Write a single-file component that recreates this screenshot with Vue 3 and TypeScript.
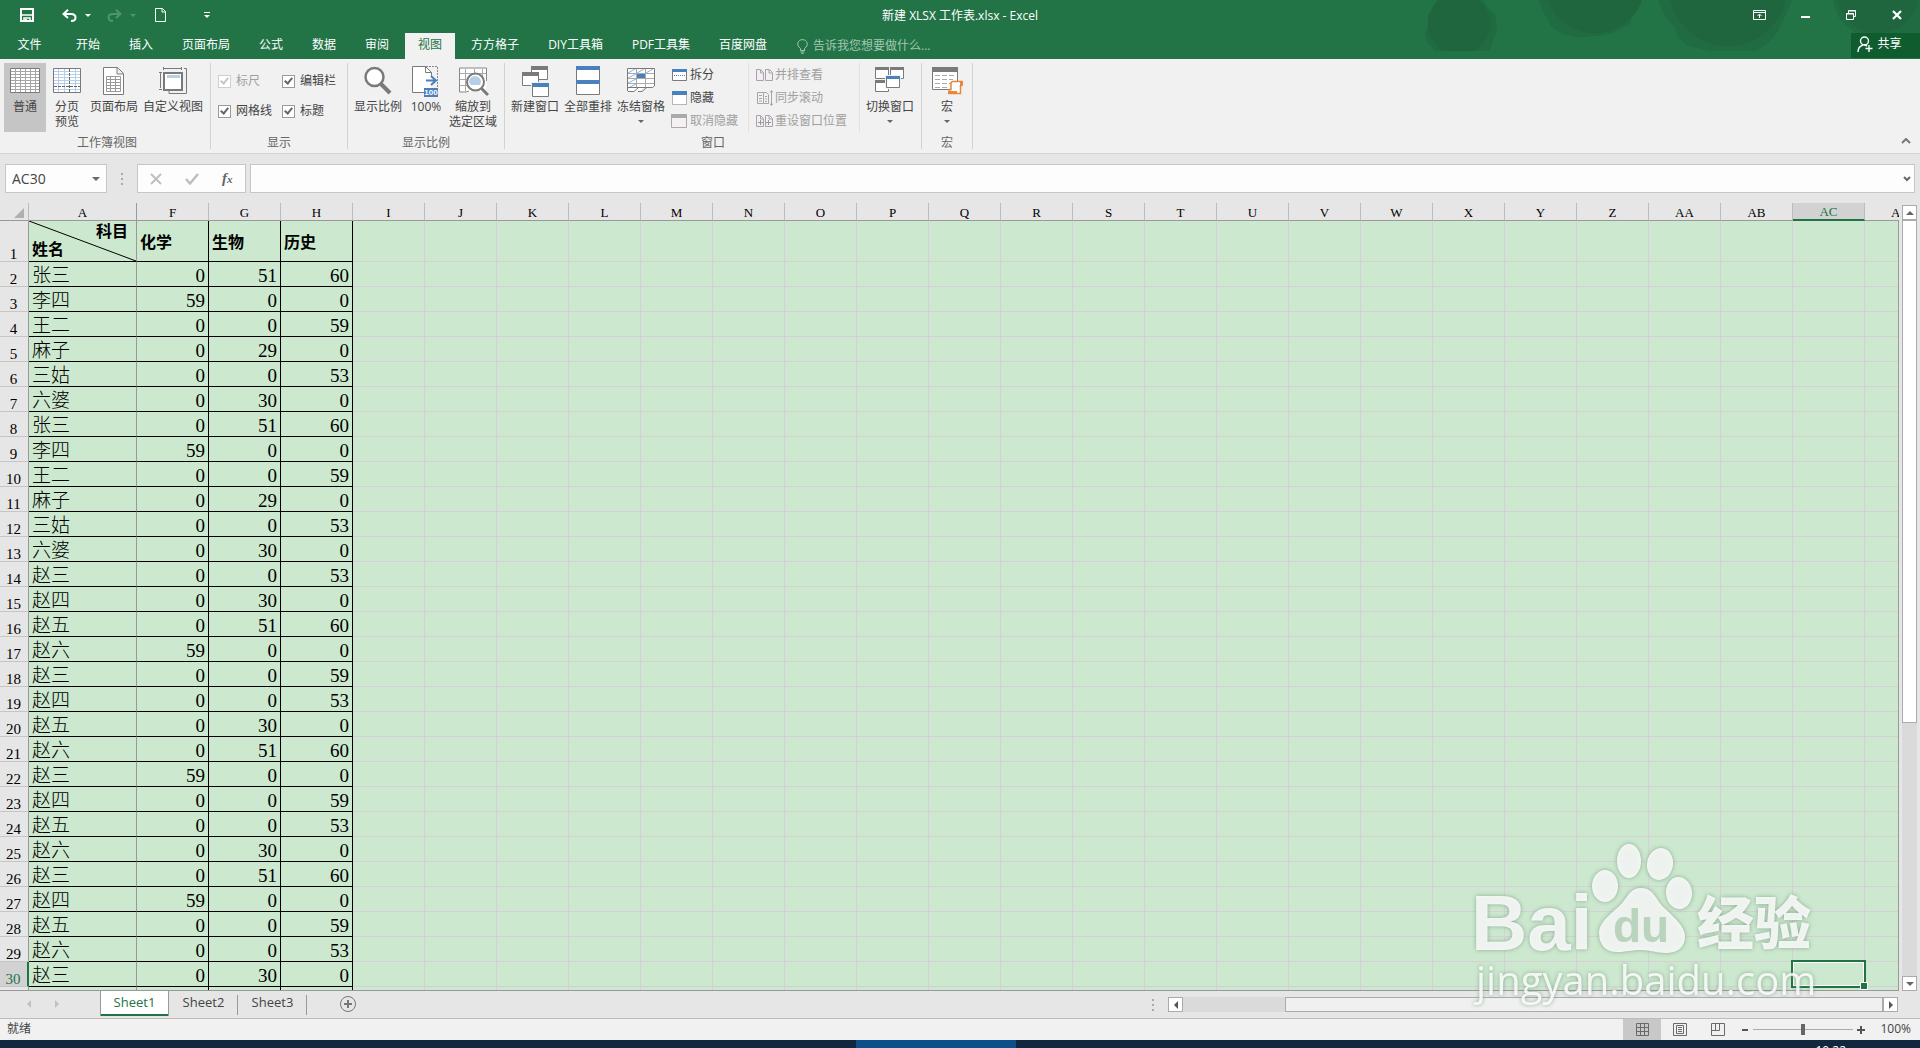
<script setup lang="ts">
import { ref } from 'vue'

const menus = ['开始', '插入', '页面布局', '公式', '数据', '审阅', '视图', '方方格子', 'DIY工具箱', 'PDF工具集', '百度网盘']
const activeMenu = ref('视图')

const emptyColumns = [
  ...'IJKLMNOPQRSTUVWXYZ'.split(''),
  'AA', 'AB', 'AC', 'AD',
]
const dataColumns = ['F', 'G', 'H']
const subjects = ['化学', '生物', '历史']

type Score = [string, number, number, number]
const scores: Score[] = [
  ['张三', 0, 51, 60], ['李四', 59, 0, 0], ['王二', 0, 0, 59], ['麻子', 0, 29, 0],
  ['三姑', 0, 0, 53], ['六婆', 0, 30, 0], ['张三', 0, 51, 60], ['李四', 59, 0, 0],
  ['王二', 0, 0, 59], ['麻子', 0, 29, 0], ['三姑', 0, 0, 53], ['六婆', 0, 30, 0],
  ['赵三', 0, 0, 53], ['赵四', 0, 30, 0], ['赵五', 0, 51, 60], ['赵六', 59, 0, 0],
  ['赵三', 0, 0, 59], ['赵四', 0, 0, 53], ['赵五', 0, 30, 0], ['赵六', 0, 51, 60],
  ['赵三', 59, 0, 0], ['赵四', 0, 0, 59], ['赵五', 0, 0, 53], ['赵六', 0, 30, 0],
  ['赵三', 0, 51, 60], ['赵四', 59, 0, 0], ['赵五', 0, 0, 59], ['赵六', 0, 0, 53],
  ['赵三', 0, 30, 0],
]

const selected = { column: 'AC', row: 30 }
const cellName = ref('AC30')
const formula = ref('')
const zoom = ref(100)
const ruler = ref(true)
const formulaBar = ref(true)
const gridLines = ref(true)
const headings = ref(true)
const sheets = ['Sheet1', 'Sheet2', 'Sheet3']
const activeSheet = ref('Sheet1')
</script>

<template>
  <div class="app">
    <header class="top">
      <svg class="decor" width="500" height="51" viewBox="0 0 500 51" aria-hidden="true">
        <g fill="#206b41">
          <path d="M17 0h46l5 8 8 7v8l1 8-4 8-3 12H15l-7-8-3-9 3-8V15z" />
          <path d="M118 0h101l-2 10-5 6-2 8-9 5-11 5-14 2-20 1-16-4-9-7-5-9z" />
          <path d="M238 0h134l-5 12-4 9-6 12-9 10-12 8h-44l-24-5-10-9-3-9-10-11z" />
          <path d="M413 0h87v33h-64l-10-7-8-10z" />
        </g>
        <g fill="#1f653e">
          <circle cx="39" cy="24" r="31" />
          <circle cx="175" cy="-17" r="50" />
          <circle cx="308" cy="-13" r="59" />
          <ellipse cx="458" cy="-4" rx="40" ry="37" />
        </g>
      </svg>
      <div class="titlebar">
        <div class="quick">
          <button class="q save" aria-label="保存">
            <svg width="14" height="14" viewBox="0 0 14 14"><path d="M1 1h12v12H1z" fill="none" stroke="#fff" stroke-width="2" /><path d="M2 7h10M4 14v-4h6v4" fill="none" stroke="#fff" stroke-width="1.5" /><path d="M5 11h2v3H5z" fill="#fff" /></svg>
          </button>
          <button class="q undo" aria-label="撤消">
            <svg width="15" height="13" viewBox="0 0 15 13"><path d="M1.500 5H9c6 0 6 7 0 7M6 .8L1.500 5 6 9" fill="none" stroke="#fff" stroke-width="2" /></svg>
          </button>
          <button class="q drop" aria-label="撤消列表"><i class="tri"></i></button>
          <button class="q redo" aria-label="恢复">
            <svg width="15" height="13" viewBox="0 0 15 13"><path d="M13.500 5H6C0 5 0 12 6 12M9 .8L13.500 5 9 9" fill="none" stroke="#4f9370" stroke-width="2" /></svg>
          </button>
          <button class="q drop dim" aria-label="恢复列表"><i class="tri"></i></button>
          <button class="q file" aria-label="新建">
            <svg width="11" height="14" viewBox="0 0 11 14"><path d="M.5.5h7l3 3v10H.5zM7 .5V4h3.500" fill="none" stroke="#fff" /></svg>
          </button>
          <button class="q more" aria-label="自定义快速访问工具栏">
            <svg width="6" height="7" viewBox="0 0 6 7"><path d="M0 .5h6" stroke="#fff" /><path d="M0 3h6L3 6z" fill="#fff" /></svg>
          </button>
        </div>
        <h1 class="title">新建 XLSX 工作表.xlsx - Excel</h1>
        <div class="winctl">
          <button aria-label="功能区显示选项"><svg width="13" height="10" viewBox="0 0 13 10"><path d="M.5.500h12v9H.5zM1 2.500h11M6.500 8V4.500M4.500 6l2-2 2 2" fill="none" stroke="#fff" /></svg></button>
          <button aria-label="最小化"><svg width="9" height="10" viewBox="0 0 9 10"><path d="M0 7h9" stroke="#fff" stroke-width="2" /></svg></button>
          <button aria-label="还原"><svg width="10" height="10" viewBox="0 0 10 10"><path d="M.5 3.500h7v6h-7zM2.500 3.500v-3h7v6h-2M.5 4h7M2.500 1h7" fill="none" stroke="#fff" /></svg></button>
          <button aria-label="关闭"><svg width="10" height="10" viewBox="0 0 10 10"><path d="M1 1l8 8M9 1L1 9" stroke="#fff" stroke-width="2.200" /></svg></button>
        </div>
      </div>
      <div class="menubar">
        <button class="menu first">文件</button>
        <nav class="menus">
          <button v-for="m in menus" :key="m" class="menu" :class="{ on: m === activeMenu }" @click="activeMenu = m">{{ m }}</button>
        </nav>
        <button class="tell">
          <svg width="11" height="15" viewBox="0 0 11 15"><path d="M3.500 11.500V9.500C-1.500 6 1 .6 5.500.6S12.500 6 7.500 9.500v2zM3.500 13h4M4.500 14.500h2" fill="none" stroke="#a3c7b2" /></svg>
          告诉我您想要做什么...
        </button>
        <button class="share">
          <svg width="16" height="17" viewBox="0 0 16 17"><circle cx="7.500" cy="5" r="4" fill="none" stroke="#fff" stroke-width="1.400" /><path d="M1 16c0-4 2-6 5-7M7 8.500l3 1.500M12 9v7M8.500 12.500h7" fill="none" stroke="#fff" stroke-width="1.400" /></svg>
          共享
        </button>
      </div>
    </header>

    <section class="ribbon">
      <div class="group g-views">
        <div class="tools">
          <button class="big pressed w42">
            <svg width="32" height="32" viewBox="0 0 32 32"><path d="M1.500 2.500h29v24h-29z" fill="#fff" /><path d="M6.500 3v23M11.500 3v23M16.500 3v23M21.500 3v23M26.500 3v23M2 5.500h28M2 8.500h28M2 11.500h28M2 14.500h28M2 17.500h28M2 20.500h28M2 23.500h28" stroke="#a5a5a5" /><path d="M1.500 2.500h29v24h-29z" fill="none" stroke="#7a7a7a" /></svg>
            <span>普通</span>
          </button>
          <button class="big w42">
            <svg width="32" height="32" viewBox="0 0 32 32"><path d="M2.500 2.500h27v24h-27z" fill="#fff" /><path d="M7.500 3v23M13.500 3v23M24.500 3v23M3 5.500h26M3 8.500h26M3 11.500h26M3 14.500h26M3 17.500h26M3 23.500h26" stroke="#b5cfe8" /><path d="M2.500 2.500h27v24h-27z" fill="none" stroke="#7a7a7a" /><path d="M18.500 3v23M3 20.500h26" stroke="#666" stroke-dasharray="3 1" /></svg>
            <span>分页<br>预览</span>
          </button>
          <button class="big w52">
            <svg width="32" height="32" viewBox="0 0 32 32"><path d="M5.500 1.500h14l6 6v21h-20zM19 1.500v6.500h6.500" fill="#fff" stroke="#7a7a7a" /><path d="M8.500 10.500h14v15h-14zM8.500 13.500h14M8.500 16.500h14M8.500 19.500h14M8.500 22.500h14M12.500 11v14M17.500 11v14" fill="none" stroke="#999" /></svg>
            <span>页面布局</span>
          </button>
          <button class="big w66">
            <svg width="32" height="32" viewBox="0 0 32 32"><path d="M6 2.500h19M6.500 1v3M24.500 1v3M3.500 6v16M2 6.500h3M2 23.500h3M27 2.500h2.500V27.500H12V25" fill="none" stroke="#7a7a7a" /><path d="M7 7h18v17H7z" fill="#fff" stroke="#7a7a7a" stroke-width="2" /><path d="M10 9h13v3H10z" fill="#b8cfe6" /></svg>
            <span>自定义视图</span>
          </button>
        </div>
        <div class="caption">工作簿视图</div>
      </div>

      <div class="group g-show">
        <div class="tools checks">
          <label class="dim"><input v-model="ruler" type="checkbox" disabled><span>标尺</span></label>
          <label><input v-model="formulaBar" type="checkbox"><span>编辑栏</span></label>
          <label><input v-model="gridLines" type="checkbox"><span>网格线</span></label>
          <label><input v-model="headings" type="checkbox"><span>标题</span></label>
        </div>
        <div class="caption">显示</div>
      </div>

      <div class="group g-zoom">
        <div class="tools">
          <button class="big w54">
            <svg width="32" height="32" viewBox="0 0 32 32"><path d="M19 18l9 9" stroke="#7a7a7a" stroke-width="4" /><circle cx="12.500" cy="11" r="9" fill="#fff" stroke="#7a7a7a" stroke-width="2.500" /></svg>
            <span>显示比例</span>
          </button>
          <button class="big w42">
            <svg width="32" height="32" viewBox="0 0 32 32"><path d="M16 .5h11.500V22" fill="none" stroke="#888" stroke-dasharray="2 1" /><path d="M2.500.500h13l6 6v20h-19z" fill="#fff" /><path d="M14 26.500H2.500V.5h13l6 6V10M15.500.5v6h6" fill="none" stroke="#7a7a7a" /><path d="M16 14.500h10M21 10l5 4.500-5 4.500" fill="none" stroke="#4a80bb" stroke-width="2" /><path d="M14 22h14v9H14z" fill="#4a80bb" /><text x="21" y="29" text-anchor="middle" class="tiny">100</text></svg>
            <span>100%</span>
          </button>
          <button class="big w52">
            <svg width="32" height="32" viewBox="0 0 32 32"><path d="M2.500 2.500h27v19l-4 4H22l-5-3-4 3H2.500z" fill="#fff" /><path d="M8.500 3v22M17.500 3v6M25.500 3v8M3 7.500h26M3 13.500h7M3 19.500h7" stroke="#aaa" /><path d="M12 25l-3 1H2.500v-24h27V15" fill="none" stroke="#888" /><path d="M24 22l7 7" stroke="#7a7a7a" stroke-width="3" /><circle cx="18.500" cy="16" r="8.500" fill="#fff" stroke="#7a7a7a" stroke-width="2" /><path d="M12 16a6 6 0 0 1 12 0l-1 3h-9z" fill="#b5cfe8" /></svg>
            <span>缩放到<br>选定区域</span>
          </button>
        </div>
        <div class="caption">显示比例</div>
      </div>

      <div class="group g-window">
        <div class="tools">
          <button class="big w54">
            <svg width="32" height="32" viewBox="0 0 32 32"><g fill="#fff" stroke="#7a7a7a"><path d="M12.500.5h16v13h-16z" /><path d="M3.500 6.500h16v13h-16z" /></g><path d="M12 0h17v4H12zM3 6h17v4H3z" fill="#7a7a7a" /><path d="M12 16h18v15H12z" fill="#f1f1f1" /><path d="M13.500 17.500h16v13h-16z" fill="#fff" stroke="#7a7a7a" /><path d="M13 17h17v4H13z" fill="#4a80bb" /></svg>
            <span>新建窗口</span>
          </button>
          <button class="big w52">
            <svg width="32" height="32" viewBox="0 0 32 32"><path d="M4.500.5h23v28h-23z" fill="#fff" stroke="#7a7a7a" /><path d="M4 0h24v4H4zM4 14h24v4H4z" fill="#4a80bb" /></svg>
            <span>全部重排</span>
          </button>
          <button class="big w54">
            <svg width="32" height="32" viewBox="0 0 32 32"><path d="M2.500 2.500h27v19h-10l-5 4h-12z" fill="#fff" /><path d="M3 7.500h26M3 12.500h26M3 17.500h26M11.500 3v18M20.500 3v18" stroke="#aaa" /><path d="M3 7l7-4M12 7l7-4M21 7l7-4M3 12l8-4M3 17l8-4M3 22l8-4" stroke="#8fb4da" /><path d="M12 8h8v4h-8z" fill="#4a80bb" /><path d="M2.500 25V2.500h27V20l-2 1.500H2.500M3 25.500h6l4-3.500M13 25.500h4l4-3.500" fill="none" stroke="#7a7a7a" /></svg>
            <span>冻结窗格</span><i class="tri"></i>
          </button>
          <div class="stack first-stack">
            <button>
              <svg width="17" height="14" viewBox="0 0 17 14"><path d="M1.500 1.500h14v11h-14z" fill="#fff" stroke="#7a7a7a" /><path d="M1 1h15v3H1z" fill="#4a80bb" /><path d="M3 7.500h11" stroke="#4a80bb" stroke-dasharray="1 1" /></svg>
              拆分
            </button>
            <button>
              <svg width="17" height="14" viewBox="0 0 17 14"><path d="M1.500 1.500h14v12h-14z" fill="#fff" stroke="#777" stroke-dasharray="1 1" /><path d="M1 0h15v4H1z" fill="#4a80bb" /></svg>
              隐藏
            </button>
            <button disabled>
              <svg width="17" height="14" viewBox="0 0 17 14"><path d="M.5.500h15v13H.5z" fill="#f4f0f4" stroke="#aaa" /><path d="M0 0h16v4H0z" fill="#aaa" /></svg>
              取消隐藏
            </button>
          </div>
          <div class="stack second-stack">
            <button disabled>
              <svg width="17" height="14" viewBox="0 0 17 14"><path d="M.5 1.500h4l3 3v8h-7zM9.500 1.500h4l3 3v8h-7zM4.500 2v3h3M13 2v3h3" fill="#f4eef4" stroke="#aaa2aa" /></svg>
              并排查看
            </button>
            <button disabled>
              <svg width="17" height="16" viewBox="0 0 17 16"><path d="M7 2.500H1.500v11H7M3 5.500h3M3 8.500h3M3 11h3M7.500 2.500h3l2 2v9h-5zM9 6.500h2M9 9h2M9 11.500h2M15.500 1v14M14 2.500l1.500-2 1.500 2M14 13.500l1.500 2 1.500-2" fill="none" stroke="#aaa2aa" /></svg>
              同步滚动
            </button>
            <button disabled>
              <svg width="17" height="14" viewBox="0 0 17 14"><path d="M.5 1.500h4l3 3v8h-7zM9.500 1.500h4l3 3v8h-7zM4.500 2v3h3M13 2v3h3" fill="#f4eef4" stroke="#aaa2aa" /><path d="M2 8.500h5M4.500 6v5M10 8.500h5M12.500 6v5" stroke="#999" /></svg>
              重设窗口位置
            </button>
          </div>
          <button class="big w60">
            <svg width="32" height="32" viewBox="0 0 32 32"><g fill="#fff" stroke="#7a7a7a"><path d="M1.500 1.500h13v11h-13zM16.500 1.500h13v11h-13zM1.500 14.500h13v11h-13z" /></g><path d="M1 1h14v3H1zM16 1h14v3H16zM1 14h14v3H1z" fill="#7a7a7a" /><path d="M11 9h16v14H11z" fill="#f1f1f1" /><path d="M12.500 10.500h13v11h-13z" fill="#fff" stroke="#7a7a7a" /><path d="M12 10h14v3H12z" fill="#4a80bb" /></svg>
            <span>切换窗口</span><i class="tri"></i>
          </button>
        </div>
        <div class="caption">窗口</div>
      </div>

      <div class="group g-macro">
        <div class="tools">
          <button class="big w50">
            <svg width="32" height="32" viewBox="0 0 32 32"><path d="M1.500 1.500h25v22h-25z" fill="#fff" stroke="#7a7a7a" /><path d="M1 1h26v5H1z" fill="#7a7a7a" /><path d="M4 9.500h20M4 13.500h18M4 17.500h16M4 21.500h14" stroke="#aaa" stroke-dasharray="5 2" /><path d="M21 15.500h10v4h-1.500v8H18.500v-4H20v-6q0-2 2-2z" fill="#fff" stroke="#e8873a" stroke-width="1.500" /><path d="M17 25h9v3h-9zM29 15h3v4h-3z" fill="#e8873a" /></svg>
            <span>宏</span><i class="tri"></i>
          </button>
        </div>
        <div class="caption">宏</div>
      </div>
      <button class="collapse" aria-label="折叠功能区"><svg width="10" height="6" viewBox="0 0 10 6"><path d="M1 5l4-4 4 4" fill="none" stroke="#777" stroke-width="2" /></svg></button>
    </section>

    <section class="formula-row">
      <div class="namebox"><input v-model="cellName" aria-label="名称框"><button aria-label="名称列表"><i class="tri wide"></i></button></div>
      <span class="dots"></span>
      <div class="fxbox">
        <button aria-label="取消"><svg width="12" height="12" viewBox="0 0 12 12"><path d="M1 1l10 10M11 1L1 11" stroke="#bdbdbd" stroke-width="1.800" /></svg></button>
        <button aria-label="输入"><svg width="14" height="12" viewBox="0 0 14 12"><path d="M1 6l4 4.500L13 1" fill="none" stroke="#bdbdbd" stroke-width="2.400" /></svg></button>
        <button class="fx" aria-label="插入函数">f<sub>x</sub></button>
      </div>
      <div class="formula"><input v-model="formula" aria-label="编辑栏"><button aria-label="展开编辑栏"><svg width="8" height="6" viewBox="0 0 8 6"><path d="M1 1l3 3 3-3" fill="none" stroke="#666" stroke-width="2" /></svg></button></div>
    </section>

    <main class="work">
      <div class="grid">
        <table>
          <colgroup>
            <col class="c-num"><col class="c-name">
            <col v-for="c in dataColumns" :key="c"><col v-for="c in emptyColumns" :key="c">
          </colgroup>
          <thead>
            <tr>
              <th class="corner"><i></i></th>
              <th class="edge">A</th>
              <th v-for="c in dataColumns" :key="c">{{ c }}</th>
              <th v-for="c in emptyColumns" :key="c" :class="{ sel: c === selected.column }">{{ c }}</th>
            </tr>
          </thead>
          <tbody>
            <tr class="head">
              <th scope="row">1</th>
              <td class="split">
                <svg width="107" height="40" viewBox="0 0 107 40" aria-hidden="true"><path d="M0 0l107 40" stroke="#000" /></svg>
                <div class="subject">科目</div><div class="person">姓名</div>
              </td>
              <td v-for="s in subjects" :key="s" class="data title-cell">{{ s }}</td>
              <td v-for="c in emptyColumns" :key="c"></td>
            </tr>
            <tr v-for="(row, i) in scores" :key="i">
              <th scope="row" :class="{ sel: i + 2 === selected.row }">{{ i + 2 }}</th>
              <td class="name">{{ row[0] }}</td>
              <td v-for="k in 3" :key="k" class="data">{{ row[k] }}</td>
              <td v-for="c in emptyColumns" :key="c" :class="{ cursor: c === selected.column && i + 2 === selected.row }"></td>
            </tr>
            <tr>
              <th scope="row"></th><td class="name"></td>
              <td v-for="k in 3" :key="k" class="data"></td>
              <td v-for="c in emptyColumns" :key="c"></td>
            </tr>
          </tbody>
        </table>
      </div>
      <div class="vscroll">
        <button aria-label="向上滚动"><i class="tri up"></i></button>
        <div class="vtrack"><div class="vthumb"></div></div>
        <button aria-label="向下滚动"><i class="tri wide"></i></button>
      </div>
    </main>

    <div class="sheetbar">
      <div class="navs">
        <button aria-label="上一张"><i class="side left"></i></button>
        <button aria-label="下一张"><i class="side right"></i></button>
      </div>
      <button v-for="s in sheets" :key="s" class="sheet" :class="{ on: s === activeSheet }" @click="activeSheet = s">{{ s }}</button>
      <button class="add" aria-label="新工作表"><svg width="18" height="18" viewBox="0 0 18 18"><circle cx="9" cy="9" r="7.500" fill="none" stroke="#777" /><path d="M5 9h8M9 5v8" stroke="#777" stroke-width="2" /></svg></button>
      <span class="dots"></span>
      <div class="hscroll">
        <button aria-label="向左滚动"><i class="side left dark"></i></button>
        <div class="htrack"><div class="hthumb"></div></div>
        <button aria-label="向右滚动"><i class="side right dark"></i></button>
      </div>
    </div>

    <footer class="status">
      <span class="ready">就绪</span>
      <button class="view on" aria-label="普通视图"><svg width="13" height="13" viewBox="0 0 13 13"><path d="M.5.500h12v12H.5zM4.500.5v12M8.500.5v12M.5 4.500h12M.5 8.500h12" fill="none" stroke="#6a6a6a" /></svg></button>
      <button class="view" aria-label="页面布局视图"><svg width="14" height="13" viewBox="0 0 14 13"><path d="M.5.500h13v12H.5zM3.500 2.500h7v8h-7zM5 4.500h4M5 6.500h4M5 8.500h4" fill="none" stroke="#6a6a6a" /></svg></button>
      <button class="view" aria-label="分页预览视图"><svg width="14" height="13" viewBox="0 0 14 13"><path d="M.5.500h13v12H.5zM4.500.5v7M8.500.5v7M.5 7.500h8" fill="none" stroke="#6a6a6a" /></svg></button>
      <button class="step" aria-label="缩小"><svg width="8" height="8" viewBox="0 0 8 8"><path d="M1 4h6" stroke="#555" stroke-width="2" /></svg></button>
      <input v-model="zoom" class="slider" type="range" min="10" max="190" aria-label="缩放级别">
      <button class="step" aria-label="放大"><svg width="8" height="8" viewBox="0 0 8 8"><path d="M0 4h8M4 0v8" stroke="#555" stroke-width="2" /></svg></button>
      <button class="percent">{{ zoom }}%</button>
    </footer>

    <div class="taskbar"><div class="task"></div><span class="clock">10:22</span></div>

    <svg class="watermark" width="360" height="180" viewBox="0 0 360 180" aria-hidden="true">
      <g fill="#fff" fill-opacity=".85">
        <text x="2" y="106" class="wm-brand">Bai</text>
        <ellipse cx="136" cy="42" rx="13" ry="16" />
        <ellipse cx="160" cy="17" rx="12" ry="17" />
        <ellipse cx="191" cy="20" rx="13" ry="16" transform="rotate(10 191 20)" />
        <ellipse cx="210" cy="49" rx="13" ry="16" transform="rotate(-5 210 49)" />
        <path d="M172 44c9 0 13 6 18 14s26 21 26 34c0 12-8 17-19 17-10 0-15-3-25-3s-15 2-24 2c-11 0-18-7-18-19 0-13 18-23 24-31s9-14 18-14z" />
        <text x="228" y="100" class="wm-cn">经验</text>
      </g>
      <text x="144" y="98" class="wm-du">du</text>
      <text x="7" y="151" class="wm-url">jingyan.baidu.com</text>
    </svg>
  </div>
</template>

<style>
html, body { overflow: hidden; background: #e6e6e6; }
</style>

<style scoped>
.app {
  position: relative;
  display: flex;
  flex-direction: column;
  height: 100vh;
  overflow: hidden;
  font: 12px/16px "Open Sans", "Noto Sans CJK SC", sans-serif;
  color: #444;
}
.app *, .app *::before, .app *::after { box-sizing: border-box; }
button {
  display: flex;
  align-items: center;
  justify-content: center;
  margin: 0;
  padding: 0;
  border: 0;
  background: none;
  color: inherit;
  font: inherit;
  white-space: nowrap;
}
input { font: inherit; color: inherit; margin: 0; }
svg { display: block; flex: none; }
.tri {
  flex: none;
  width: 0;
  height: 0;
  border: 3px solid transparent;
  border-top: 3px solid #666;
  border-bottom: 0;
}
.tri.wide { border-width: 4px 4px 0; }
.tri.up { border-width: 0 4px 4px; border-bottom: 4px solid #666; }

.top { position: relative; flex: none; background: #227447; color: #fff; }
.decor { position: absolute; top: 0; right: 0; width: 500px; }
.titlebar { position: relative; display: flex; height: 33px; justify-content: space-between; }
.quick { display: flex; flex: 1; align-items: center; padding-bottom: 3px; }
.save { margin-left: 20px; }
.undo { margin-left: 28px; }
.drop { width: 22px; }
.drop .tri { border-top-color: #fff; }
.drop.dim .tri { border-top-color: #4f9370; }
.redo { margin-left: 8px; }
.file { margin-left: 11px; }
.more { margin-left: 38px; }
.title { margin: 0; font-size: 12px; font-weight: 400; line-height: 31px; }
.winctl { display: flex; flex: 1; justify-content: flex-end; padding-bottom: 3px; }
.winctl button { width: 46px; }
.menubar { position: relative; display: flex; height: 26px; }
.menus { display: flex; gap: 3px; margin-left: 4px; }
.menu { padding: 0 13px 2px; }
.menu.first { width: 59px; }
.menu.on { background: #f1f1f1; color: #217346; }
.tell { gap: 5px; margin-left: 17px; color: #a3c7b2; }
.share { gap: 4px; width: 69px; height: 25px; margin-left: auto; padding: 0 12px 3px 0; background: #0f5c2f; }

.ribbon { display: flex; flex: none; height: 95px; padding: 4px 0 4px 4px; background: #f1f1f1; border-bottom: 1px solid #d2d2d2; }
.group { display: flex; flex-direction: column; border-right: 1px solid #d2d2d2; }
.tools { display: flex; flex: 1; align-items: flex-start; }
.caption { height: 12px; line-height: 12px; text-align: center; color: #666; }
.g-views { width: 207px; }
.g-show { width: 137px; }
.g-zoom { width: 157px; }
.g-zoom .tools { padding-left: 3px; }
.g-window { width: 417px; }
.g-window .tools { padding-left: 3px; }
.g-macro { width: 51px; }
.big { flex: none; flex-direction: column; justify-content: flex-start; height: 69px; padding-top: 3px; line-height: 15px; }
.big span { margin-top: 1px; }
.big .tri { margin-top: 6px; }
.big.pressed { background: #c5c5c5; }
.w42 { width: 42px; }
.w50 { width: 50px; }
.w52 { width: 52px; }
.w54 { width: 54px; }
.w60 { width: 60px; }
.w66 { width: 66px; }
.tiny { font: bold 8px "Liberation Sans", sans-serif; fill: #fff; }
.checks { display: grid; grid-template-columns: 64px 1fr; grid-template-rows: 30px 30px; padding: 3px 0 0 7px; align-items: center; }
.checks label { display: flex; align-items: center; gap: 5px; }
.checks label.dim { color: #a0a0a0; }
.checks input { position: relative; appearance: none; width: 13px; height: 13px; border: 1px solid #9a9a9a; background: #fff; }
.checks input:checked::after { content: ""; position: absolute; left: 3px; top: 0; width: 5px; height: 8px; border: solid #666; border-width: 0 2px 2px 0; transform: rotate(40deg); }
.checks .dim input { border-color: #cfcfcf; }
.checks .dim input:checked::after { border-color: #c5c5c5; }
.stack { display: flex; flex-direction: column; height: 69px; }
.stack button { gap: 2px; height: 23px; justify-content: flex-start; }
.stack button:disabled { color: #a0a0a0; }
.first-stack { width: 81px; padding-left: 3px; border-right: 1px solid #e0e0e0; }
.second-stack { width: 111px; padding-left: 7px; border-right: 1px solid #e0e0e0; }
.collapse { align-self: flex-end; width: 28px; height: 16px; margin-left: auto; }

.formula-row { display: flex; flex: none; gap: 4px; height: 49px; padding: 10px 5px; background: #e6e6e6; }
.formula-row > div { display: flex; height: 29px; background: #fdfdfd; border: 1px solid #c6c6c6; }
.formula-row input { flex: 1; min-width: 0; padding: 0 0 0 6px; border: 0; background: none; outline: 0; font-size: 14px; }
.namebox { width: 102px; }
.namebox button { width: 20px; }
.dots { width: 2px; height: 12px; background: repeating-linear-gradient(#aaa 0 2px, transparent 2px 5px); }
.formula-row .dots { align-self: center; margin: 0 10px; }
.fxbox { width: 109px; }
.fxbox button { flex: 1; }
.fx { font: italic bold 15px "Liberation Serif", serif; color: #666; }
.fx sub { font-size: 11px; line-height: 8px; }
.formula { flex: 1; }
.formula button { width: 15px; }

.work { display: flex; flex: 1; min-height: 0; background: #e6e6e6; }
.grid { flex: 1; min-width: 0; overflow: hidden; border-bottom: 1px solid #999; position: relative; }
.grid::after { content: ""; position: absolute; top: 17px; right: 0; bottom: 0; width: 1px; background: #999; }
table { table-layout: fixed; width: 100%; border-collapse: separate; border-spacing: 0; }
col { width: 72px; }
.c-num { width: 29px; }
.c-name { width: 108px; }
th { padding: 0; font: 14px/16px "Liberation Serif", serif; color: #000; background: #e6e6e6; }
thead th { height: 18px; border-right: 1px solid #bcbcbc; border-bottom: 1px solid #999; font-size: 13px; line-height: 15px; vertical-align: bottom; }
thead th.edge { border-right-color: #999; }
thead th.sel { background: #d2d2d2; color: #217346; border-bottom: 2px solid #217346; }
.corner i { display: block; width: 0; height: 0; margin: 0 4px 2px auto; border-left: 10px solid transparent; border-bottom: 10px solid #b0b0b0; }
tbody th { height: 25px; padding: 0 1px 0 0; font-size: 15px; line-height: 14px; vertical-align: bottom; border-right: 1px solid #999; border-bottom: 1px solid #c6c6c6; }
tbody th.sel { background: #d2d2d2; color: #217346; border-right: 2px solid #217346; }
td { height: 25px; padding: 4px 3px 0; background: #cce8cf; border-right: 1px solid #d4d0d6; border-bottom: 1px solid #d4d0d6; font: 19px/20px "Liberation Serif", "Noto Sans CJK SC", serif; color: #000; white-space: nowrap; }
.head th, .head td { height: 41px; }
td.name, td.split { border-right-color: #999; border-bottom-color: #000; }
td.name { font-weight: 300; }
td.data { border-right-color: #000; border-bottom-color: #000; text-align: right; }
td.title-cell { text-align: left; font-size: 16px; font-weight: 700; padding-bottom: 1px; }
td.split { position: relative; padding: 2px 8px 0 3px; font-size: 16px; line-height: 18px; font-weight: 700; vertical-align: top; }
.split svg { position: absolute; left: 0; top: 0; }
.subject { text-align: right; }
.cursor { position: relative; }
.cursor::before { content: ""; position: absolute; inset: -2px; border: 2px solid #217346; box-shadow: inset 0 0 0 1px #fff; }
.cursor::after { content: ""; position: absolute; right: -3px; bottom: -3px; width: 6px; height: 6px; background: #217346; outline: 1px solid #fff; }

.vscroll { display: flex; flex-direction: column; width: 21px; padding: 2px 3px 0; }
.vscroll button, .hscroll button { flex: none; width: 15px; height: 15px; background: #fff; border: 1px solid #ababab; }
.vtrack { flex: 1; background: #dadada; }
.vthumb { height: 66.5%; background: #fff; border: 1px solid #ababab; }

.sheetbar { display: flex; flex: none; height: 28px; align-items: flex-start; background: #e6e6e6; border-bottom: 1px solid #bcbcbc; }
.navs { display: flex; width: 100px; height: 26px; padding-left: 15px; }
.navs button { width: 28px; }
.side { width: 0; height: 0; border: 4px solid transparent; }
.side.left { border-left: 0; border-right-color: #c0c0c0; }
.side.right { border-right: 0; border-left-color: #c0c0c0; }
.side.left.dark { border-right-color: #555; }
.side.right.dark { border-left-color: #555; }
.sheet { position: relative; width: 69px; height: 25px; padding-bottom: 3px; font-size: 13px; }
.sheet:not(.on)::after { content: ""; position: absolute; right: 0; top: 4px; bottom: 1px; width: 1px; background: #999; }
.sheet.on { background: #fff; color: #217346; border: solid #999; border-width: 0 1px; box-shadow: inset 0 -2px #217346; }
.add { width: 20px; height: 26px; margin-left: 31px; }
.sheetbar .dots { margin: 8px 14px 0 auto; }
.hscroll { display: flex; width: 38%; padding-top: 6px; margin-right: 22px; }
.htrack { flex: 1; display: flex; justify-content: flex-end; background: #dadada; }
.hthumb { width: 85.5%; background: #f0f0f0; border: 1px solid #ababab; }

.status { display: flex; flex: none; height: 21px; align-items: center; padding-right: 9px; background: #f1f1f1; }
.ready { margin: 0 auto 2px 7px; }
.view { width: 38px; height: 21px; }
.view.on { background: #c8c8c8; }
.step { width: 16px; height: 20px; }
.slider { appearance: none; width: 100px; height: 20px; background: linear-gradient(#aaa, #aaa) center / 100% 1px no-repeat; }
.slider::-webkit-slider-thumb { appearance: none; width: 4px; height: 11px; background: #666; }
.percent { width: 34px; margin-left: 8px; padding-bottom: 2px; justify-content: flex-end; }

.taskbar { display: flex; flex: none; height: 8px; justify-content: center; overflow: hidden; position: relative; background: #10273f; }
.task { width: 160px; margin-right: 48px; background: #0b5089; }
.clock { position: absolute; right: 74px; top: 3px; color: #fff; }

.watermark { position: absolute; right: 91px; bottom: 24px; pointer-events: none; filter: drop-shadow(0 0 2px #7f9f86); }
.wm-brand { font: bold 78px "Liberation Sans", sans-serif; }
.wm-cn { font: 900 57px "Noto Sans CJK SC", sans-serif; }
.wm-du { font: bold 46px "Liberation Sans", sans-serif; fill: #b9d3bd; }
.wm-url { font: 40px "Open Sans", sans-serif; fill: #fff; fill-opacity: .85; }
</style>
